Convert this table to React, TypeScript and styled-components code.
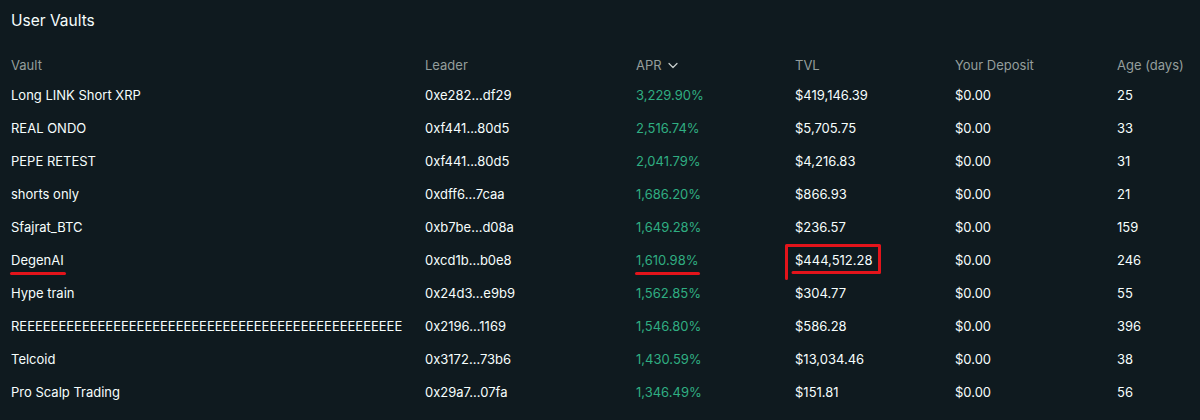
import React from "react";
import styled, { createGlobalStyle } from "styled-components";

const Global = createGlobalStyle`
  html, body { margin: 0; padding: 0; background: #0f1a1f; }
  body { font-family: Inter, "Noto Sans", sans-serif; -webkit-font-smoothing: antialiased; }
`;

const Page = styled.div`
  width: 1200px;
  height: 420px;
  background: #0f1a1f;
  overflow: hidden;
  box-sizing: border-box;
`;

const Title = styled.h2`
  margin: 0;
  padding: 9px 11px 0;
  height: 51px;
  box-sizing: border-box;
  font-size: 15.5px;
  line-height: 24px;
  font-weight: 400;
  color: #f6fefd;
`;

const cols = "414px 211px 159px 160px 162px 1fr";

const HeaderRow = styled.div`
  display: grid;
  grid-template-columns: ${cols};
  padding-left: 11px;
  height: 27px;
  align-items: center;
  font-size: 13px;
  color: #949e9c;
`;

const Row = styled.div`
  display: grid;
  grid-template-columns: ${cols};
  padding-left: 11px;
  height: 33px;
  align-items: center;
  font-size: 13px;
  color: #f6fefd;
  white-space: nowrap;
`;

const HeadCell = styled.div`
  display: flex;
  align-items: center;
  gap: 5px;
`;

const Cell = styled.div<{ $green?: boolean }>`
  position: relative;
  line-height: 16px;
  color: ${(p) => (p.$green ? "#2fae82" : "inherit")};
`;

const Marked = styled.span`
  position: relative;
  display: inline-block;
  &::after {
    content: "";
    position: absolute;
    left: -1px;
    right: -2px;
    bottom: -7px;
    height: 3px;
    border-radius: 2px;
    background: #e3141b;
  }
`;

const BoxMark = styled.svg`
  position: absolute;
  left: -10px;
  top: -8px;
  pointer-events: none;
`;

type V = { name: string; leader: string; apr: string; tvl: string; age: string; mark?: boolean };

const data: V[] = [
  { name: "Long LINK Short XRP", leader: "0xe282...df29", apr: "3,229.90%", tvl: "$419,146.39", age: "25" },
  { name: "REAL ONDO", leader: "0xf441...80d5", apr: "2,516.74%", tvl: "$5,705.75", age: "33" },
  { name: "PEPE RETEST", leader: "0xf441...80d5", apr: "2,041.79%", tvl: "$4,216.83", age: "31" },
  { name: "shorts only", leader: "0xdff6...7caa", apr: "1,686.20%", tvl: "$866.93", age: "21" },
  { name: "Sfajrat_BTC", leader: "0xb7be...d08a", apr: "1,649.28%", tvl: "$236.57", age: "159" },
  { name: "DegenAI", leader: "0xcd1b...b0e8", apr: "1,610.98%", tvl: "$444,512.28", age: "246", mark: true },
  { name: "Hype train", leader: "0x24d3...e9b9", apr: "1,562.85%", tvl: "$304.77", age: "55" },
  { name: "R" + "E".repeat(49), leader: "0x2196...1169", apr: "1,546.80%", tvl: "$586.28", age: "396" },
  { name: "Telcoid", leader: "0x3172...73b6", apr: "1,430.59%", tvl: "$13,034.46", age: "38" },
  { name: "Pro Scalp Trading", leader: "0x29a7...07fa", apr: "1,346.49%", tvl: "$151.81", age: "56" },
];

const Chevron = () => (
  <svg width="12" height="12" viewBox="0 0 12 12" fill="none">
    <path d="M2 4.5 L6 8.5 L10 4.5" stroke="#c9d0ce" strokeWidth="1.2" strokeLinecap="round" strokeLinejoin="round" />
  </svg>
);

export default function App() {
  return (
    <Page>
      <Global />
      <Title>User Vaults</Title>
      <HeaderRow>
        <HeadCell>Vault</HeadCell>
        <HeadCell>Leader</HeadCell>
        <HeadCell>
          APR <Chevron />
        </HeadCell>
        <HeadCell>TVL</HeadCell>
        <HeadCell>Your Deposit</HeadCell>
        <HeadCell>Age (days)</HeadCell>
      </HeaderRow>
      {data.map((v) => (
        <Row key={v.name + v.leader}>
          <Cell>{v.mark ? <Marked>{v.name}</Marked> : v.name}</Cell>
          <Cell>{v.leader}</Cell>
          <Cell $green>{v.mark ? <Marked>{v.apr}</Marked> : v.apr}</Cell>
          <Cell>
            {v.tvl}
            {v.mark && (
              <BoxMark width="100" height="40" viewBox="0 0 100 40">
                <path
                  d="M1.5 34.5 L1.5 1.5 L94.5 1.5 L94.5 28.5 L8 28.5"
                  stroke="#e3141b"
                  strokeWidth="3"
                  fill="none"
                  strokeLinecap="round"
                  strokeLinejoin="round"
                />
              </BoxMark>
            )}
          </Cell>
          <Cell>$0.00</Cell>
          <Cell>{v.age}</Cell>
        </Row>
      ))}
    </Page>
  );
}
